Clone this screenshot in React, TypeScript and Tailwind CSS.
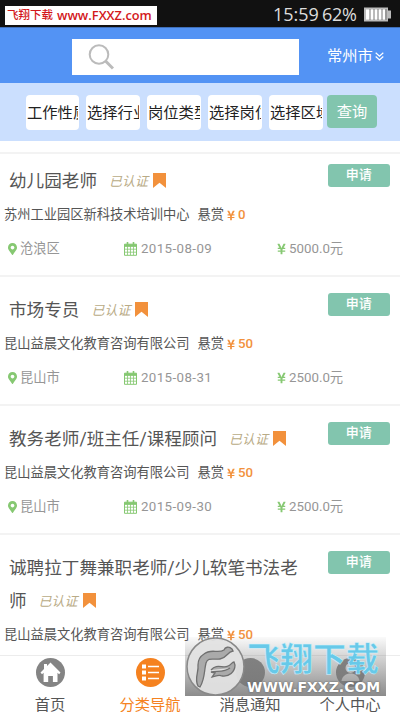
import { FaMapMarkerAlt, FaYenSign } from "react-icons/fa"

const filters = [
  { label: "工作性质", box: "ml-[26px] w-[53px]" },
  { label: "选择行业", box: "ml-[7px] w-[54px]" },
  { label: "岗位类型", box: "ml-[7px] w-[54px]" },
  { label: "选择岗位", box: "ml-[7px] w-[54px]" },
  { label: "选择区域", box: "ml-[7px] w-[54px]" },
]

const jobs = [
  {
    title: "幼儿园老师",
    company: "苏州工业园区新科技术培训中心",
    reward: "0",
    area: "沧浪区",
    date: "2015-08-09",
    salary: "5000.0元",
  },
  {
    title: "市场专员",
    company: "昆山益晨文化教育咨询有限公司",
    reward: "50",
    area: "昆山市",
    date: "2015-08-31",
    salary: "2500.0元",
  },
  {
    title: "教务老师/班主任/课程顾问",
    company: "昆山益晨文化教育咨询有限公司",
    reward: "50",
    area: "昆山市",
    date: "2015-09-30",
    salary: "2500.0元",
  },
  {
    title: "诚聘拉丁舞兼职老师/少儿软笔书法老师",
    company: "昆山益晨文化教育咨询有限公司",
    reward: "50",
    area: "昆山市",
    date: "2015-09-30",
    salary: "2500.0元",
  },
]

type Job = (typeof jobs)[number]

function Calendar() {
  return (
    <svg className="h-[14px] w-[13px] shrink-0" viewBox="0 0 13 14" fill="none" stroke="#86c872">
      <path d="M.5 4h12v9.3H.5z" />
      <path d="M.5 2.2h12v2H.5z" fill="#86c872" />
      <path d="M3.5 0v4M9.5 0v4" strokeWidth="1.6" />
      <path d="M.5 7.2h12M.5 10.2h12M3.5 4v9M6.5 4v9M9.5 4v9" strokeWidth=".8" />
    </svg>
  )
}

function JobCard({ job }: { job: Job }) {
  return (
    <li className="h-[129px] border-t-2 border-[#f3f3f3] first:h-[123px] first:[&>div:first-child]:-mt-[6px]">
      <div className="flex items-start">
        <h2 className="w-[310px] shrink-0 pt-[17px] pl-[9px] text-[17.6px] leading-[33px] text-[#555]">
          {job.title}
          <span className="ml-[12px] inline-block align-[1px] text-[13px] leading-none text-[#b9ab86] italic">已认证</span>
          <svg className="ml-[5px] inline-block h-[15px] w-[13px] align-[-1px]" viewBox="0 0 13 15">
            <path d="M0 0h13v15L6.5 9.8 0 15z" fill="#f2913c" />
          </svg>
        </h2>
        <button className="mt-[16px] ml-[17.5px] h-[22.5px] w-[62.5px] rounded-[3px] bg-[#82c5ae] text-[13px] leading-[22px] font-medium text-white">
          申请
        </button>
      </div>
      <p className="mt-[8px] flex pl-[4px] text-[13.25px] leading-[18px] whitespace-nowrap text-[#555]">
        {job.company}
        <span className="ml-[8px]">悬赏</span>
        <span className="ml-[2px] flex items-center gap-[2px] font-medium text-[#f2913c]">
          <FaYenSign className="h-[11px] w-[10px]" />
          {job.reward}
        </span>
      </p>
      <div className="mt-[15px] flex h-[19px] items-center text-[13.3px] leading-[19px] text-[#969696]">
        <span className="flex w-[124px] items-center gap-[3px] pl-[8px]">
          <FaMapMarkerAlt className="h-[12px] w-[9px] text-[#86c872]" />
          {job.area}
        </span>
        <span className="flex w-[153px] items-center gap-[4px]">
          <Calendar />
          <span className="tracking-[0.4px]">{job.date}</span>
        </span>
        <span className="flex items-center gap-[3px]">
          <FaYenSign className="h-[12px] w-[9px] text-[#86c872]" />
          {job.salary}
        </span>
      </div>
    </li>
  )
}

function StatusBar() {
  return (
    <div className="flex h-[27px] shrink-0 items-start bg-[#111]">
      <div className="mt-[6px] ml-[5px] flex h-[19px] w-[152px] items-center bg-white pl-[2px] text-[11.5px] whitespace-nowrap text-[#d3171b]">
        <span className="font-medium">飞翔下载</span>
        <span className="ml-[4px] font-[Open_Sans,sans-serif] text-[12.8px] font-semibold">www.FXXZ.com</span>
      </div>
      <div className="ml-[116px] flex h-[28px] items-center font-[Open_Sans,sans-serif] text-[18px] whitespace-nowrap text-[#ddd]">
        <span className="w-[49px]">15:59</span>
        <span className="w-[42px] tracking-[-0.3px]">62%</span>
        <svg className="h-[15px] w-[27px]" viewBox="0 0 27 15">
          <path d="M0 .5h24v3h3v8h-3v3H0z" fill="#bbb" />
          <path d="M2 2.5h19v10H2z" fill="#fff" />
          <path d="M6 2v11M10 2v11M14 2v11M18 2v11M22 2v11" stroke="#777" />
        </svg>
      </div>
    </div>
  )
}

function TabBar() {
  return (
    <nav className="grid h-[57px] shrink-0 grid-cols-4 border-t border-[#ececec] bg-white text-[15.3px] text-[#555]">
      <div className="flex flex-col items-center pt-[2px]">
        <svg className="size-[29px]" viewBox="0 0 29 29">
          <circle cx="14.5" cy="14.5" r="14.5" fill="#848484" />
          <path d="M14.5 4.5l10 10-1.4 1.7-1.6-1.5V24h-4.6v-6h-4.7v6H7.6v-9.3L6 16.2l-1.5-1.7L8 11V6h3v2z" fill="#fff" />
        </svg>
        <span className="mt-[8px] leading-[20px]">首页</span>
      </div>
      <div className="flex flex-col items-center pt-[2px] text-[#f58220]">
        <svg className="size-[29px]" viewBox="0 0 29 29">
          <circle cx="14.5" cy="14.5" r="14.5" fill="#f58220" />
          <path d="M6 6.5h4v4H6zM6 12.5h4v4H6zM6 18.5h4v4H6z" fill="#fff" />
          <path d="M12 8.5h11M12 14.5h11M12 20.5h11" stroke="#fff" strokeWidth="1.3" />
        </svg>
        <span className="mt-[8px] leading-[20px]">分类导航</span>
      </div>
      <div className="flex flex-col items-center pt-[2px]">
        <svg className="size-[29px]" viewBox="0 0 29 29">
          <circle cx="14.5" cy="14.5" r="14.5" fill="#848484" />
        </svg>
        <span className="mt-[8px] leading-[20px]">消息通知</span>
      </div>
      <div className="flex flex-col items-center pt-[2px]">
        <svg className="size-[29px]" viewBox="0 0 29 29">
          <circle cx="14.5" cy="14.5" r="14.5" fill="#848484" />
          <circle cx="14.5" cy="10" r="5" fill="#fff" />
          <path d="M5.5 23c1-10 17-10 18 0z" fill="#fff" />
        </svg>
        <span className="mt-[8px] leading-[20px]">个人中心</span>
      </div>
    </nav>
  )
}

function Watermark() {
  return (
    <div className="absolute top-[637px] left-[185px] flex h-[59px] w-[201px] bg-linear-to-b from-[#999]/5 to-[#777]/85">
      <svg className="h-[59px] w-[60px] shrink-0" viewBox="0 0 60 59">
        <circle cx="30.5" cy="29.5" r="28.5" fill="#e2e2e2" fillOpacity=".95" stroke="#888" strokeWidth="1.5" />
        <path
          d="M13 49C9 41 14 35 13 28C13 24 14 20 19 17C26 11 33 17 39 13C40 10 44 9 47 12L48 14C42 15 42 21 35 22C28 23 23 20 21 26C19 34 20 42 15 50Z"
          fill="#aaa"
          stroke="#707070"
          strokeWidth="1.3"
        />
        <path
          d="M26 33C32 26 38 32 43 29C46 28 47 25 49 25L50 28C50 35 44 40 37 39C33 37 30 40 27 40L30 36L26 35C33 34 40 35 45 31"
          fill="#aaa"
          stroke="#707070"
          strokeWidth="1.3"
        />
      </svg>
      <div className="flex flex-col items-start whitespace-nowrap">
        <span className="mt-[5px] ml-[2px] text-[33px] leading-[36px] font-bold text-[#67c9e9] [-webkit-text-stroke:0.5px_#d9f3fb]">
          飞翔下载
        </span>
        <span className="mt-[2px] ml-[2px] font-[DejaVu_Sans,sans-serif] text-[14px] leading-[14px] font-bold text-white [text-shadow:0_0_2px_#555]">
          WWW.FXXZ.COM
        </span>
      </div>
    </div>
  )
}

export default function App() {
  return (
    <div className="relative flex h-[712px] w-[400px] flex-col overflow-hidden bg-white font-[Roboto,Noto_Sans_CJK_SC,sans-serif]">
      <StatusBar />

      {/* Search */}
      <header className="flex h-[56px] shrink-0 items-start border-t border-[#3f6fb9] bg-[#5393f4]">
        <div className="mt-[11px] ml-[72px] flex h-[36px] w-[227px] items-center bg-white pl-[16px]">
          <svg className="size-[26px]" viewBox="0 0 26 26" fill="none" stroke="#bbb">
            <circle cx="11" cy="10.5" r="9.3" strokeWidth="2" />
            <path d="M17.5 17l7.5 7.5" strokeWidth="3" />
          </svg>
        </div>
        <div className="mt-[17px] ml-[28px] flex items-center text-[15.3px] leading-[22px] text-white">
          常州市
          <svg className="ml-[2px] h-[9px] w-[9px]" viewBox="0 0 9 9" fill="none" stroke="#fff" strokeWidth="1.2">
            <path d="M.7.7l3.8 3.4L8.3.7M.7 4.5l3.8 3.4 3.8-3.4" />
          </svg>
        </div>
      </header>

      {/* Filters */}
      <div className="flex h-[58px] shrink-0 items-start bg-[#cbdffe] pt-[12px]">
        {filters.map((f) => (
          <div key={f.label} className={`${f.box} h-[35px] shrink-0 rounded-[4px] bg-white px-px`}>
            <div className="overflow-hidden pt-px text-[15.3px] leading-[34px] whitespace-nowrap text-[#222]">{f.label}</div>
          </div>
        ))}
        <button className="ml-[4px] h-[33px] w-[50px] shrink-0 rounded-[4px] bg-[#82c5ae] pt-px text-[15.3px] text-white">查询</button>
      </div>

      {/* Job list */}
      <ul className="min-h-0 flex-1 overflow-hidden pt-[11px]">
        {jobs.map((job) => (
          <JobCard key={job.title} job={job} />
        ))}
      </ul>

      <TabBar />
      <Watermark />
    </div>
  )
}
